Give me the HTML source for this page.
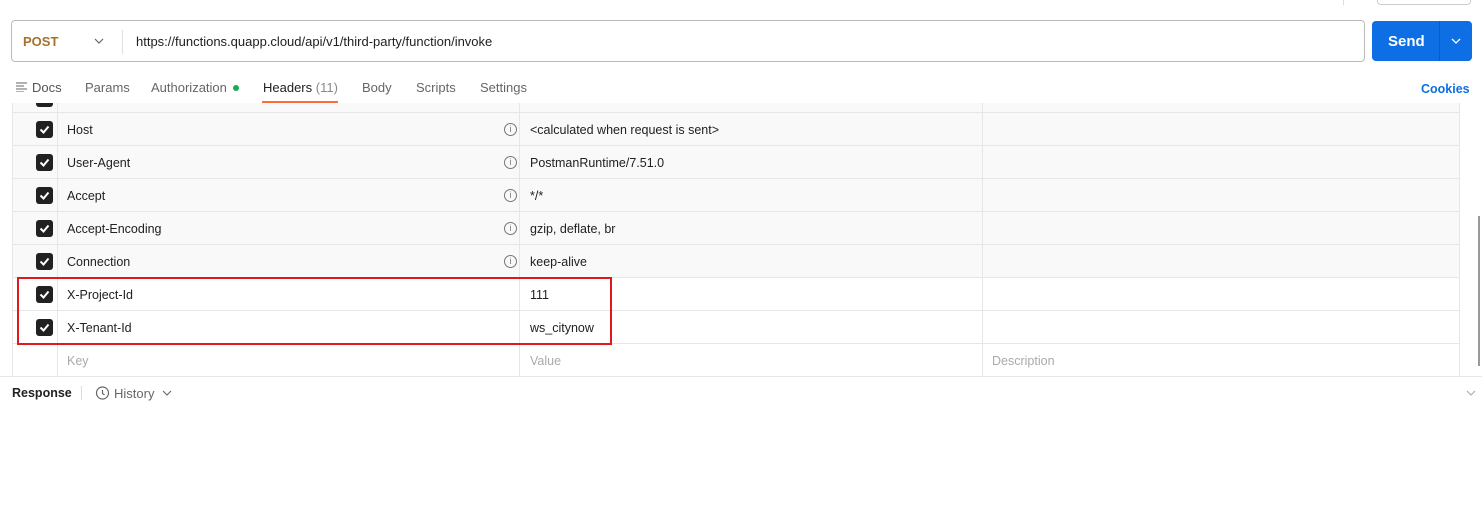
<!DOCTYPE html>
<html><head><style>
*{box-sizing:border-box;margin:0;padding:0}
body{width:1482px;height:517px;background:#fff;font-family:"Liberation Sans",sans-serif;font-size:12.5px;color:#212121;position:relative;overflow:hidden}
.a{position:absolute}
.row{position:absolute;left:12px;width:1448px;height:33px;border-bottom:1px solid #e6e6e6;overflow:hidden}
.row.g{background:#f9f9f9}
.cell{position:absolute;top:1px;height:33px;line-height:33px;white-space:nowrap}
.cb{position:absolute;left:24px;top:8px;width:17px;height:17px;background:#212121;border-radius:3px}
.cb svg{position:absolute;left:2px;top:2px}
.info{position:absolute;left:492px;top:10px;width:13px;height:13px;border:1px solid #777;border-radius:50%;font-size:9px;line-height:11px;text-align:center;color:#777}
.vl{position:absolute;top:103px;height:274px;width:1px;background:#e6e6e6}
</style></head><body>
<div class="a" style="left:1377px;top:-10px;width:94px;height:15px;border:1px solid #ccc;border-radius:4px"></div>
<div class="a" style="left:1343px;top:0;width:1px;height:5px;background:#ddd"></div>
<div class="a" style="left:11px;top:20px;width:1354px;height:42px;border:1px solid #bbb;border-radius:4px"></div>
<div class="a" style="left:23px;top:34px;color:#a8702a;font-weight:bold;font-size:13px">POST</div>
<svg class="a" style="left:94px;top:37px" width="10" height="8"><path d="M1 2l4 4 4-4" fill="none" stroke="#666" stroke-width="1.2"/></svg>
<div class="a" style="left:122px;top:30px;width:1px;height:24px;background:#e0e0e0"></div>
<div class="a" style="left:136px;top:34px;font-size:13px">https://functions.quapp.cloud/api/v1/third-party/function/invoke</div>
<div class="a" style="left:1372px;top:21px;width:100px;height:40px;background:#0d6fe3;border-radius:4px"></div>
<div class="a" style="left:1439px;top:21px;width:1px;height:40px;background:#0a5dc0"></div>
<div class="a" style="left:1388px;top:33px;color:#fff;font-weight:bold;font-size:15px">Send</div>
<svg class="a" style="left:1450px;top:37px" width="12" height="8"><path d="M2 2l4 4 4-4" fill="none" stroke="#fff" stroke-width="1.3"/></svg>
<svg class="a" style="left:16px;top:82px" width="12" height="10"><path d="M0 1h11M0 4h8M0 7h11M0 10h8" stroke="#666" stroke-width="1"/></svg>
<div class="a" style="left:32px;top:80px;color:#555;font-size:13px">Docs</div>
<div class="a" style="left:85px;top:80px;color:#666;font-size:13px">Params</div>
<div class="a" style="left:151px;top:80px;color:#666;font-size:13px">Authorization</div>
<div class="a" style="left:233px;top:85px;width:6px;height:6px;border-radius:50%;background:#1aaa55"></div>
<div class="a" style="left:263px;top:80px;color:#212121;font-size:13px">Headers <span style="color:#888">(11)</span></div>
<div class="a" style="left:262px;top:101px;width:76px;height:2px;background:#ff6c37"></div>
<div class="a" style="left:362px;top:80px;color:#666;font-size:13px">Body</div>
<div class="a" style="left:416px;top:80px;color:#666;font-size:13px">Scripts</div>
<div class="a" style="left:480px;top:80px;color:#666;font-size:13px">Settings</div>
<div class="a" style="left:1421px;top:82px;color:#0d6fe3;font-size:12.5px;font-weight:bold">Cookies</div>

<div class="row g" style="top:103px;height:10px"><div class="cb" style="top:-13px"></div></div>
<div class="row g" style="top:113px"><div class="cb"><svg width="13" height="13"><path d="M2.5 6.5l3 3 5-6" fill="none" stroke="#fff" stroke-width="2"/></svg></div><div class="cell" style="left:55px">Host</div><div class="info">i</div><div class="cell" style="left:518px">&lt;calculated when request is sent&gt;</div></div>
<div class="row g" style="top:146px"><div class="cb"><svg width="13" height="13"><path d="M2.5 6.5l3 3 5-6" fill="none" stroke="#fff" stroke-width="2"/></svg></div><div class="cell" style="left:55px">User-Agent</div><div class="info">i</div><div class="cell" style="left:518px">PostmanRuntime/7.51.0</div></div>
<div class="row g" style="top:179px"><div class="cb"><svg width="13" height="13"><path d="M2.5 6.5l3 3 5-6" fill="none" stroke="#fff" stroke-width="2"/></svg></div><div class="cell" style="left:55px">Accept</div><div class="info">i</div><div class="cell" style="left:518px">*/*</div></div>
<div class="row g" style="top:212px"><div class="cb"><svg width="13" height="13"><path d="M2.5 6.5l3 3 5-6" fill="none" stroke="#fff" stroke-width="2"/></svg></div><div class="cell" style="left:55px">Accept-Encoding</div><div class="info">i</div><div class="cell" style="left:518px">gzip, deflate, br</div></div>
<div class="row g" style="top:245px"><div class="cb"><svg width="13" height="13"><path d="M2.5 6.5l3 3 5-6" fill="none" stroke="#fff" stroke-width="2"/></svg></div><div class="cell" style="left:55px">Connection</div><div class="info">i</div><div class="cell" style="left:518px">keep-alive</div></div>
<div class="row" style="top:278px"><div class="cb"><svg width="13" height="13"><path d="M2.5 6.5l3 3 5-6" fill="none" stroke="#fff" stroke-width="2"/></svg></div><div class="cell" style="left:55px">X-Project-Id</div><div class="cell" style="left:518px">111</div></div>
<div class="row" style="top:311px"><div class="cb"><svg width="13" height="13"><path d="M2.5 6.5l3 3 5-6" fill="none" stroke="#fff" stroke-width="2"/></svg></div><div class="cell" style="left:55px">X-Tenant-Id</div><div class="cell" style="left:518px">ws_citynow</div></div>
<div class="row" style="top:344px"><div class="cell" style="left:55px;color:#aaa">Key</div><div class="cell" style="left:518px;color:#aaa">Value</div><div class="cell" style="left:980px;color:#aaa">Description</div></div>
<div class="vl" style="left:12px"></div><div class="vl" style="left:57px"></div><div class="vl" style="left:519px"></div><div class="vl" style="left:982px"></div><div class="vl" style="left:1459px"></div>
<div class="a" style="left:0;top:376px;width:1482px;height:1px;background:#e6e6e6"></div>
<div class="a" style="left:17px;top:277px;width:595px;height:68px;border:2px solid #e0191f"></div>
<div class="a" style="left:1478px;top:216px;width:2px;height:150px;background:#999"></div>
<div class="a" style="left:12px;top:386px;font-weight:bold;font-size:12.5px">Response</div>
<div class="a" style="left:81px;top:386px;width:1px;height:14px;background:#ddd"></div>
<svg class="a" style="left:94px;top:385px" width="16" height="16"><circle cx="8.5" cy="8" r="6" fill="none" stroke="#666" stroke-width="1.2"/><path d="M8.5 5v3.5l2 1.5" fill="none" stroke="#666" stroke-width="1.2"/></svg>
<div class="a" style="left:114px;top:386px;color:#666;font-size:13px">History</div>
<svg class="a" style="left:162px;top:390px" width="10" height="7"><path d="M1 1l4 4 4-4" fill="none" stroke="#666" stroke-width="1.1"/></svg>
<svg class="a" style="left:1466px;top:390px" width="10" height="7"><path d="M1 1l4 4 4-4" fill="none" stroke="#aaa" stroke-width="1.1"/></svg>
</body></html>
